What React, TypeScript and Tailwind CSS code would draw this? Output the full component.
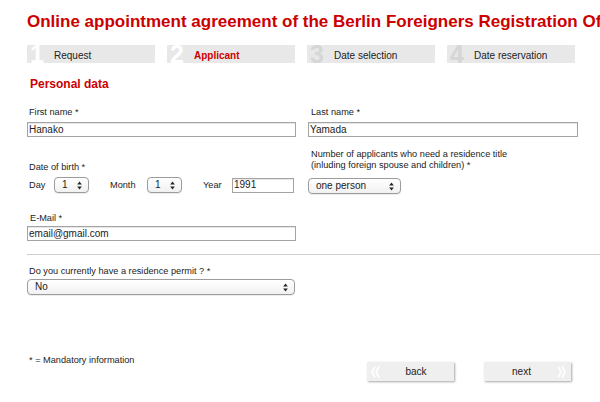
import React from 'react';

const steps = [
  { num: '1', label: 'Request', active: false, done: true },
  { num: '2', label: 'Applicant', active: true, done: true },
  { num: '3', label: 'Date selection', active: false, done: false },
  { num: '4', label: 'Date reservation', active: false, done: false },
];

const SelectArrows: React.FC = () => (
  <svg width="5" height="9" viewBox="0 0 5 9" className="shrink-0">
    <path d="M2.5 0.5 L4.8 3.6 L0.2 3.6 Z" fill="#222" />
    <path d="M2.5 8.5 L4.8 5.4 L0.2 5.4 Z" fill="#222" />
  </svg>
);

const FakeSelect: React.FC<{ value: string; className: string }> = ({ value, className }) => (
  <div
    className={`flex h-[16px] items-center justify-between rounded-[4px] border border-[#9c9c9c] bg-gradient-to-b from-white to-[#f1f1f1] pl-[7px] pr-[6px] text-[10px] leading-none shadow-[0_1px_1px_rgba(0,0,0,0.08)] ${className}`}
  >
    <span>{value}</span>
    <SelectArrows />
  </div>
);

const TextInput: React.FC<{ value: string; className: string }> = ({ value, className }) => (
  <div
    className={`flex h-[15px] items-center border border-[#a4a4a4] bg-white pl-[1px] text-[10px] leading-none shadow-[inset_0_1px_1px_rgba(0,0,0,0.1)] ${className}`}
  >
    {value}
  </div>
);

const Chevrons: React.FC<{ dir: 'left' | 'right' }> = ({ dir }) => (
  <svg width="9" height="12" viewBox="0 0 9 12">
    {dir === 'left' ? (
      <>
        <polyline points="4,0.5 1,6 4,11.5" fill="none" stroke="#fff" strokeWidth="1.6" />
        <polyline points="8,0.5 5,6 8,11.5" fill="none" stroke="#fff" strokeWidth="1.6" />
      </>
    ) : (
      <>
        <polyline points="1,0.5 4,6 1,11.5" fill="none" stroke="#fff" strokeWidth="1.6" />
        <polyline points="5,0.5 8,6 5,11.5" fill="none" stroke="#fff" strokeWidth="1.6" />
      </>
    )}
  </svg>
);

const App: React.FC = () => {
  return (
    <div className="h-[402px] w-[600px] overflow-hidden bg-white font-['Liberation_Sans',Arial,sans-serif] text-[#222]">
      <div className="pl-[27px] pt-[12px]">
        {/* Title */}
        <h1 className="whitespace-nowrap text-[17px] font-bold leading-[20px] text-[#cc0000]">
          Online appointment agreement of the Berlin Foreigners Registration Office
        </h1>

        {/* Steps */}
        <div className="mt-[13px] flex gap-[12px]">
          {steps.map((s) => (
            <div key={s.num} className="flex h-[18px] w-[128px] items-center overflow-hidden bg-[#e8e8e8]">
              <span
                className={`w-[27px] pl-[3px] text-[25px] font-bold leading-[18px] ${
                  s.done ? 'text-white' : 'text-[#d6d6d6]'
                }`}
              >
                {s.num}
              </span>
              <span
                className={`mt-[3px] text-[10px] leading-none ${s.active ? 'font-bold text-[#cc0000]' : 'text-[#222]'}`}
              >
                {s.label}
              </span>
            </div>
          ))}
        </div>

        <h2 className="mt-[14px] pl-[3px] text-[12px] font-bold leading-[14px] text-[#cc0000]">Personal data</h2>

        {/* Form fields */}
        <div className="mt-[16px] flex gap-[12px] text-[9.2px] leading-[11px]">
          {/* Left column */}
          <div className="flex w-[269px] flex-col">
            <label className="pl-[2px]">First name *</label>
            <TextInput value="Hanako" className="mt-[4px] w-[269px]" />

            <label className="mt-[25px] pl-[2px]">Date of birth *</label>
            <div className="mt-[4px] flex items-center">
              <span className="w-[27px] pl-[2px]">Day</span>
              <FakeSelect value="1" className="w-[35px]" />
              <span className="w-[58px] pl-[21px]">Month</span>
              <FakeSelect value="1" className="w-[35px]" />
              <span className="w-[50px] pl-[21px]">Year</span>
              <TextInput value="1991" className="w-[62px]" />
            </div>

            <label className="mt-[20px] pl-[3px]">E-Mail *</label>
            <TextInput value="email@gmail.com" className="mt-[2px] w-[269px]" />
          </div>

          {/* Right column */}
          <div className="flex w-[270px] flex-col">
            <label className="pl-[3px]">Last name *</label>
            <TextInput value="Yamada" className="mt-[4px] w-[270px]" />

            <label className="mt-[12px] pl-[3px]">
              Number of applicants who need a residence title
              <br />
              (inluding foreign spouse and children) *
            </label>
            <FakeSelect value="one person" className="mt-[7px] w-[93px]" />
          </div>
        </div>

        <div className="mt-[13px] h-[1px] bg-[#cfcfcf]" />

        <div className="flex flex-col text-[9.2px] leading-[11px]">
          <label className="mt-[11px] pl-[2px]">Do you currently have a residence permit ? *</label>
          <FakeSelect value="No" className="mt-[2px] w-[268px]" />
        </div>

        {/* Footer */}
        <div className="mt-[60px] flex items-start">
          <span className="pl-[2px] text-[9.2px] leading-[11px]">* = Mandatory information</span>
          <div className="ml-auto mr-[29px] mt-[7px] flex gap-[30px]">
            <button className="flex h-[19px] w-[87px] items-center bg-[#efefef] pl-[4px] text-[10px] shadow-[1px_1px_2px_rgba(0,0,0,0.35)]">
              <Chevrons dir="left" />
              <span className="flex-1 pr-[2px] text-center">back</span>
            </button>
            <button className="flex h-[19px] w-[87px] items-center bg-[#efefef] pr-[5px] text-[10px] shadow-[1px_1px_2px_rgba(0,0,0,0.35)]">
              <span className="flex-1 pl-[2px] text-center">next</span>
              <Chevrons dir="right" />
            </button>
          </div>
        </div>
      </div>
    </div>
  );
};

export default App;
